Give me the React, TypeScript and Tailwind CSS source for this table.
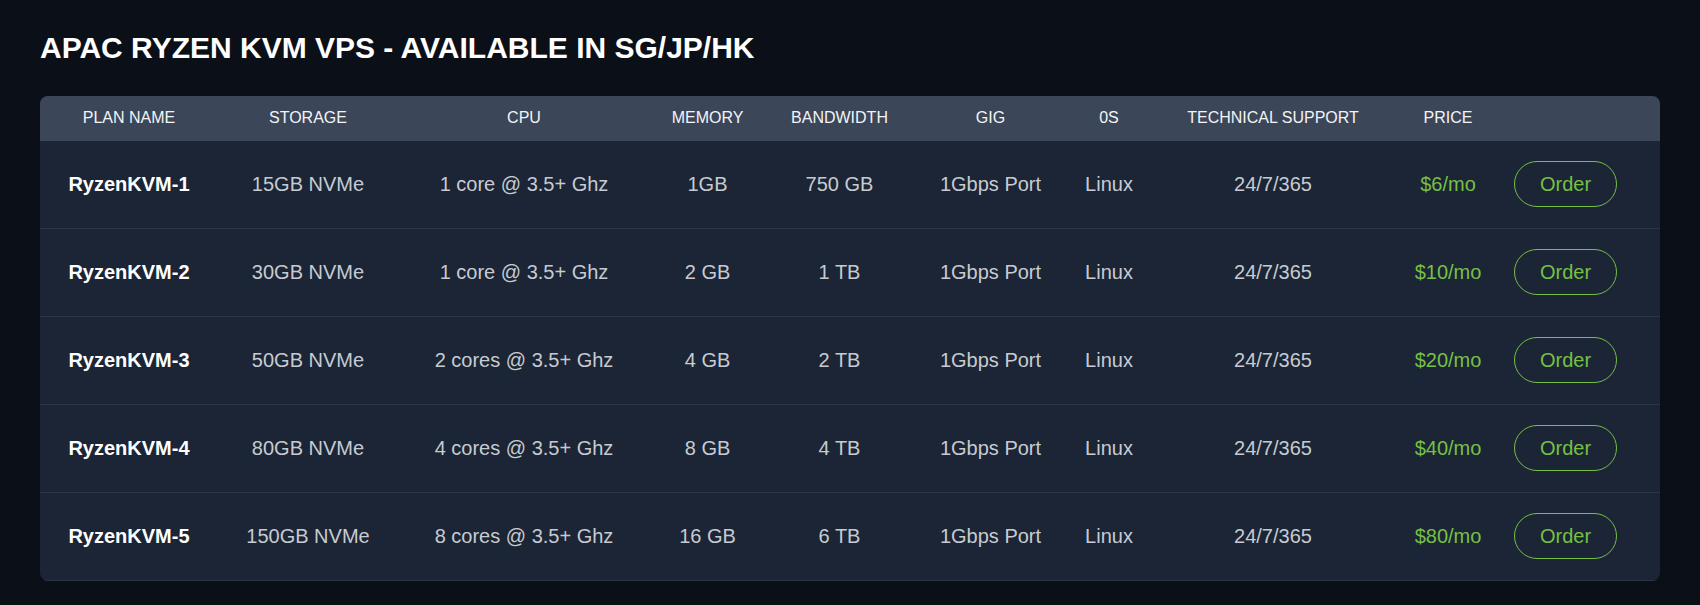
import React from 'react';

interface Plan {
  name: string;
  storage: string;
  cpu: string;
  memory: string;
  bandwidth: string;
  price: string;
}

const plans: Plan[] = [
  { name: 'RyzenKVM-1', storage: '15GB NVMe', cpu: '1 core @ 3.5+ Ghz', memory: '1GB', bandwidth: '750 GB', price: '$6/mo' },
  { name: 'RyzenKVM-2', storage: '30GB NVMe', cpu: '1 core @ 3.5+ Ghz', memory: '2 GB', bandwidth: '1 TB', price: '$10/mo' },
  { name: 'RyzenKVM-3', storage: '50GB NVMe', cpu: '2 cores @ 3.5+ Ghz', memory: '4 GB', bandwidth: '2 TB', price: '$20/mo' },
  { name: 'RyzenKVM-4', storage: '80GB NVMe', cpu: '4 cores @ 3.5+ Ghz', memory: '8 GB', bandwidth: '4 TB', price: '$40/mo' },
  { name: 'RyzenKVM-5', storage: '150GB NVMe', cpu: '8 cores @ 3.5+ Ghz', memory: '16 GB', bandwidth: '6 TB', price: '$80/mo' },
];

const headers = ['Plan Name', 'Storage', 'CPU', 'Memory', 'Bandwidth', 'Gig', '0S', 'Technical Support', 'Price', ''];

const cols = 'grid grid-cols-[178px_180px_252px_115px_149px_153px_84px_244px_106px_1fr]';

const App: React.FC = () => {
  return (
    <div className="min-h-screen bg-[#0a0f18] px-10 pt-[30px] pb-6 font-['Liberation_Sans',Arial,sans-serif]">
      <h2 className="text-[30px] leading-[1.2] font-bold text-white mb-[30px]">
        APAC RYZEN KVM VPS - AVAILABLE IN SG/JP/HK
      </h2>

      <div className="rounded-lg overflow-hidden bg-[#1b2535]">
        {/* Header */}
        <div className={`${cols} h-[44.5px] items-center bg-[#3b4659] text-base text-[#f3f4f6] uppercase`}>
          {headers.map((h, i) => (
            <div key={i} className="text-center">{h}</div>
          ))}
        </div>

        {/* Rows */}
        {plans.map((plan) => (
          <div
            key={plan.name}
            className={`${cols} h-[88px] items-center border-b border-[#2b3544] text-xl text-[#c7cbd1]`}
          >
            <div className="text-center font-bold text-white">{plan.name}</div>
            <div className="text-center">{plan.storage}</div>
            <div className="text-center">{plan.cpu}</div>
            <div className="text-center">{plan.memory}</div>
            <div className="text-center">{plan.bandwidth}</div>
            <div className="text-center">1Gbps Port</div>
            <div className="text-center">Linux</div>
            <div className="text-center">24/7/365</div>
            <div className="text-center text-[#76c043]">{plan.price}</div>
            <div className="pl-[13px]">
              <button className="w-[103px] h-[46px] rounded-full border border-[#76c043] text-[#76c043] text-xl">
                Order
              </button>
            </div>
          </div>
        ))}
      </div>
    </div>
  );
};

export default App;
